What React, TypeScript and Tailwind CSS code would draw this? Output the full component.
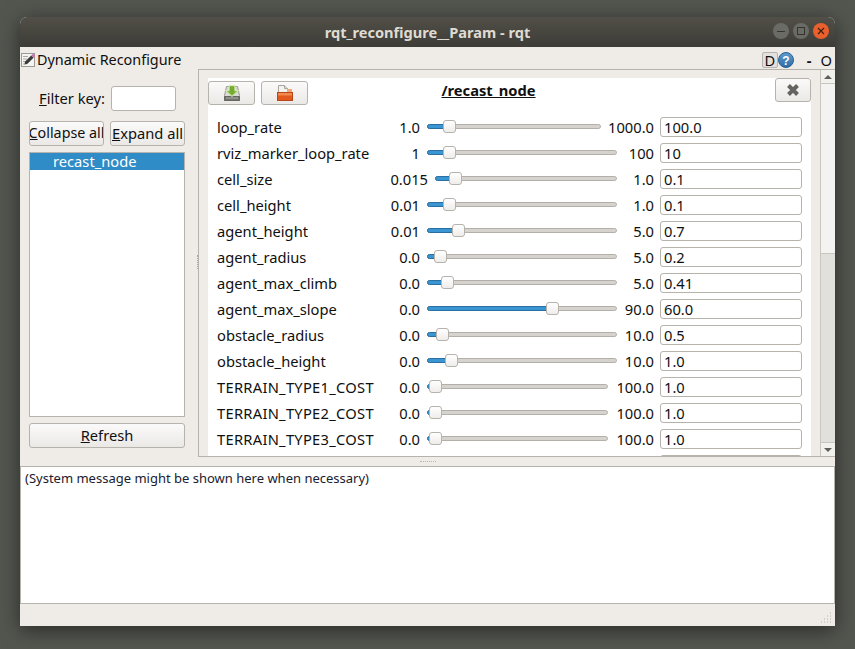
const font = { fontFamily: '"Noto Sans", "Open Sans", sans-serif' };

interface ParamRow {
  name: string;
  min: string;
  max: string;
  value: string;
  minW: string;
  maxW: string;
  thumb: number;
}

const rows: ParamRow[] = [
  { name: "loop_rate", min: "1.0", max: "1000.0", value: "100.0", minW: "w-[33px]", maxW: "w-[46px]", thumb: 16 },
  { name: "rviz_marker_loop_rate", min: "1", max: "100", value: "10", minW: "w-[33px]", maxW: "w-[30px]", thumb: 16 },
  { name: "cell_size", min: "0.015", max: "1.0", value: "0.1", minW: "w-[41px]", maxW: "w-[30px]", thumb: 14 },
  { name: "cell_height", min: "0.01", max: "1.0", value: "0.1", minW: "w-[33px]", maxW: "w-[30px]", thumb: 16 },
  { name: "agent_height", min: "0.01", max: "5.0", value: "0.7", minW: "w-[33px]", maxW: "w-[30px]", thumb: 25 },
  { name: "agent_radius", min: "0.0", max: "5.0", value: "0.2", minW: "w-[33px]", maxW: "w-[30px]", thumb: 7 },
  { name: "agent_max_climb", min: "0.0", max: "5.0", value: "0.41", minW: "w-[33px]", maxW: "w-[30px]", thumb: 14 },
  { name: "agent_max_slope", min: "0.0", max: "90.0", value: "60.0", minW: "w-[33px]", maxW: "w-[30px]", thumb: 119 },
  { name: "obstacle_radius", min: "0.0", max: "10.0", value: "0.5", minW: "w-[33px]", maxW: "w-[30px]", thumb: 9 },
  { name: "obstacle_height", min: "0.0", max: "10.0", value: "1.0", minW: "w-[33px]", maxW: "w-[30px]", thumb: 18 },
  { name: "TERRAIN_TYPE1_COST", min: "0.0", max: "100.0", value: "1.0", minW: "w-[33px]", maxW: "w-[39px]", thumb: 2 },
  { name: "TERRAIN_TYPE2_COST", min: "0.0", max: "100.0", value: "1.0", minW: "w-[33px]", maxW: "w-[39px]", thumb: 2 },
  { name: "TERRAIN_TYPE3_COST", min: "0.0", max: "100.0", value: "1.0", minW: "w-[33px]", maxW: "w-[39px]", thumb: 2 },
];

const btn =
  "flex items-center justify-center rounded-[3px] border border-[#b6b2ac] bg-gradient-to-b from-[#fbfafa] to-[#ebe9e6]";

function Slider({ thumb }: { thumb: number }) {
  return (
    <div className="relative h-[13px] min-w-0 flex-1">
      <div className="absolute inset-x-0 top-[4px] h-[5px] rounded-full border border-[#b3afa9] bg-[#d6d3ce]" />
      <div
        className="absolute left-0 top-[4px] h-[5px] rounded-l-full border border-[#2a6f9f] bg-[#3a96d3]"
        style={{ width: thumb + 4 }}
      />
      <div
        className="absolute top-0 h-[13px] w-[13px] rounded-[3px] border border-[#b6b2ac] bg-gradient-to-b from-white to-[#efedea]"
        style={{ left: thumb }}
      />
    </div>
  );
}

function Row({ row }: { row: ParamRow }) {
  const upper = row.name.startsWith("TERRAIN");
  return (
    <div className="flex h-[26px] flex-none items-center">
      <span className={`w-[170px] flex-none whitespace-nowrap ${upper ? "tracking-[0.28px]" : ""}`}>{row.name}</span>
      <span className={`${row.minW} flex-none whitespace-nowrap text-right`}>{row.min}</span>
      <div className="ml-[7px] flex min-w-0 flex-1 items-center self-stretch pb-px">
        <Slider thumb={row.thumb} />
      </div>
      <span className={`${row.maxW} ml-[7px] flex-none whitespace-nowrap text-right`}>{row.max}</span>
      <div className="ml-[6px] flex h-[20px] w-[142px] flex-none items-center rounded-[3px] border border-[#b6b2ac] bg-white pl-[3px]">
        {row.value}
      </div>
    </div>
  );
}

function SaveIcon() {
  return (
    <svg width="20" height="20" viewBox="0 0 20 20">
      <path d="M4.500 3.500h11l2 9v5h-15v-5z" fill="#d9dbd4" stroke="#9a9c95" />
      <path d="M2.500 13.500h15v4h-15z" fill="#74766f" stroke="#64665f" />
      <rect x="4" y="14.500" width="12" height="1" fill="#a8aaa3" />
      <path d="M7 2.500h6v5h3.500L10 13.500 3.500 7.500H7z" fill="#93c451" stroke="#d8e8b8" />
      <path d="M8 3.500h4v5h2L10 12 6 8.500h2z" fill="#74ab33" />
    </svg>
  );
}

function FolderIcon() {
  return (
    <svg width="18" height="18" viewBox="0 0 18 18">
      <path d="M2.500 1.500h6l3 3v4h-9z" fill="#f4f2ee" stroke="#a9a6a0" />
      <path d="M8.500 1.500v3h3" fill="#dedcd6" stroke="#a9a6a0" />
      <rect x="11" y="5" width="5" height="3" fill="#f0a878" />
      <rect x="1.500" y="8.500" width="15" height="8" fill="#e2591f" stroke="#b7461a" />
      <rect x="2" y="9" width="14" height="2.500" fill="#f08a4e" />
    </svg>
  );
}

function PageIcon() {
  return (
    <svg width="16" height="16" viewBox="0 0 16 16">
      <rect x="1.500" y="1.500" width="13" height="13" fill="#f4f4f2" stroke="#9a9a96" />
      <path d="M3 4.500h5M3 7h4M3 9.500h3M3 12h2" stroke="#a8a8a4" />
      <path d="M4 13l1.200-3.500 6-6 2.300 2.300-6 6z" fill="#3a3a38" />
      <path d="M11.200 3.500l1.800-1.800 2.300 2.300-1.800 1.800z" fill="#c86fb0" />
      <path d="M4 13l.6-1.800 1.200 1.200z" fill="#e8d8b0" />
    </svg>
  );
}

function HelpIcon() {
  return (
    <svg width="16" height="16" viewBox="0 0 16 16">
      <defs>
        <linearGradient id="help" x1="0" y1="0" x2="0" y2="1">
          <stop offset="0" stopColor="#5f9ccf" />
          <stop offset="1" stopColor="#2f6ca6" />
        </linearGradient>
      </defs>
      <circle cx="8" cy="8" r="7.500" fill="url(#help)" stroke="#2c5f92" />
      <text x="8" y="12.500" textAnchor="middle" fontSize="12" fontWeight="700" fill="#ffffff" fontFamily="Liberation Sans, sans-serif">
        ?
      </text>
    </svg>
  );
}

function CloseIcon() {
  return (
    <svg width="14" height="14" viewBox="0 0 14 14">
      <path d="M2.500 2.500l9 9M11.500 2.500l-9 9" stroke="#646461" strokeWidth="4" strokeLinecap="butt" />
    </svg>
  );
}

function Grip() {
  return (
    <svg width="12" height="12" viewBox="0 0 12 12" className="absolute bottom-[2px] right-[2px]">
      <path d="M9 1h1M6 4h1M9 4h1M3 7h1M6 7h1M9 7h1M0 10h1M3 10h1M6 10h1M9 10h1" stroke="#b6b2ac" strokeWidth="1" />
    </svg>
  );
}

export default function App() {
  return (
    <div className="h-[649px] w-[855px] overflow-hidden bg-[#53554f] pl-[20px] pt-[17px]" style={font}>
      <div className="flex h-[609px] w-[815px] flex-col overflow-hidden rounded-t-[7px] bg-[#efebe7] text-[14.7px] leading-[20px] text-[#101010] shadow-[0_4px_20px_rgba(0,0,0,0.5)]">
        {/* title bar */}
        <div className="relative flex h-[30px] flex-none items-center justify-center bg-gradient-to-b from-[#514f47] to-[#3d3c37] text-[14.6px] font-bold text-[#dfdbd2]">
          rqt_reconfigure__Param - rqt
          <div className="absolute right-[6px] top-[6px] flex gap-[4px]">
            <div className="flex h-[16px] w-[16px] items-center justify-center rounded-full bg-[#6b6b66]">
              <div className="h-px w-[8px] bg-[#35342f]" />
            </div>
            <div className="flex h-[16px] w-[16px] items-center justify-center rounded-full bg-[#6b6b66]">
              <div className="h-[8px] w-[8px] border border-[#35342f]" />
            </div>
            <div className="flex h-[16px] w-[16px] items-center justify-center rounded-full bg-[#e9602c]">
              <svg width="8" height="8" viewBox="0 0 8 8">
                <path d="M1 1l6 6M7 1l-6 6" stroke="#3d2015" strokeWidth="1.200" />
              </svg>
            </div>
          </div>
        </div>

        {/* plugin header */}
        <div className="flex h-[22px] flex-none items-center pt-[4px]">
          <PageIcon />
          <span className="ml-px text-[14.4px]">Dynamic Reconfigure</span>
          <div className="ml-auto flex items-center pr-[3px]">
            <div className="flex h-[16px] w-[16px] items-center justify-center rounded-[2px] border border-[#b6b2ac] bg-[#e3e1de]">D</div>
            <HelpIcon />
            <span className="ml-[13px] font-bold">-</span>
            <span className="ml-[9px]">O</span>
          </div>
        </div>

        {/* main split */}
        <div className="flex h-[388px] flex-none">
          <div className="relative flex w-[178px] flex-none flex-col pl-[9px] pr-[13px] pt-[17px]">
            <div className="flex h-[25px] flex-none items-center justify-end gap-[6px] pr-[9px]">
              <span className="pb-[2px]">
                <u>F</u>ilter key:
              </span>
              <div className="h-[25px] w-[65px] rounded-[3px] border border-[#b6b2ac] bg-white" />
            </div>
            <div className="mt-[10px] flex h-[25px] flex-none justify-between">
              <div className={`${btn} w-[75px] overflow-hidden whitespace-nowrap pb-[2px] text-[14.3px]`}>
                <span>
                  <u>C</u>ollapse all
                </span>
              </div>
              <div className={`${btn} w-[75px] overflow-hidden whitespace-nowrap pb-[2px]`}>
                <span>
                  <u>E</u>xpand all
                </span>
              </div>
            </div>
            <div className="mt-[6px] h-[265px] flex-none border border-[#b6b2ac] bg-white">
              <div className="h-[17px] bg-[#308cc6] pl-[23px] leading-[17px] text-white">recast_node</div>
            </div>
            <div className={`${btn} mt-[6px] h-[25px] flex-none pb-[2px]`}>
              <span>
                <u>R</u>efresh
              </span>
            </div>
            {/* splitter handle */}
            <div className="absolute right-[0px] top-[186px] h-[14px] w-px border-l border-dotted border-[#a8a49e]" />
          </div>

          <div className="flex min-w-0 flex-1 border-y border-l border-[#b6b2ac]">
            <div className="flex min-w-0 flex-1 pl-[9px] pr-[9px] pt-[8px]">
              <div className="flex min-w-0 flex-1 flex-col overflow-hidden bg-white">
                <div className="relative flex h-[36px] flex-none items-center justify-center pb-[12px] pr-[42px]">
                  <span className="text-[14.7px] font-bold underline">/recast_node</span>
                  <div className={`${btn} absolute left-0 top-[3px] h-[24px] w-[47px]`}>
                    <SaveIcon />
                  </div>
                  <div className={`${btn} absolute left-[53px] top-[3px] h-[24px] w-[47px]`}>
                    <FolderIcon />
                  </div>
                  <div className={`${btn} absolute right-0 top-[0px] h-[24px] w-[36px]`}>
                    <CloseIcon />
                  </div>
                </div>
                <div className="flex flex-col pl-[9px] pr-[9px]">
                  {rows.map((row) => (
                    <Row key={row.name} row={row} />
                  ))}
                  {/* next row, only the top of its field shows above the clip */}
                  <div className="flex h-[26px] flex-none items-center justify-end">
                    <div className="h-[20px] w-[142px] rounded-[3px] border border-[#b6b2ac] bg-white" />
                  </div>
                </div>
              </div>
            </div>
            {/* scrollbar */}
            <div className="flex w-[15px] flex-none flex-col border-l border-[#c9c5bf]">
              <div className="flex h-[14px] flex-none items-center justify-center border-b border-[#c9c5bf] bg-[#f3f1ee]">
                <div className="h-0 w-0 border-x-[4px] border-b-[4px] border-x-transparent border-b-[#5f5f5c]" />
              </div>
              <div className="h-[169px] flex-none bg-[#f5f3f1]" />
              <div className="flex-1 border-t border-[#c9c5bf] bg-[#e2e0dd]" />
              <div className="flex h-[14px] flex-none items-center justify-center border-t border-[#c9c5bf] bg-[#f3f1ee]">
                <div className="h-0 w-0 border-x-[4px] border-t-[4px] border-x-transparent border-t-[#5f5f5c]" />
              </div>
            </div>
          </div>
        </div>

        {/* splitter */}
        <div className="flex h-[9px] flex-none items-center justify-center">
          <div className="h-px w-[16px] border-t border-dotted border-[#b6b2ac]" />
        </div>

        {/* message area */}
        <div className="h-[138px] flex-none border border-[#b6b2ac] bg-white pl-[4px] pt-[2px] text-[13px] leading-[18px] text-[#1a2030]">
          (System message might be shown here when necessary)
        </div>

        {/* status bar */}
        <div className="relative flex-1">
          <Grip />
        </div>
      </div>
    </div>
  );
}
